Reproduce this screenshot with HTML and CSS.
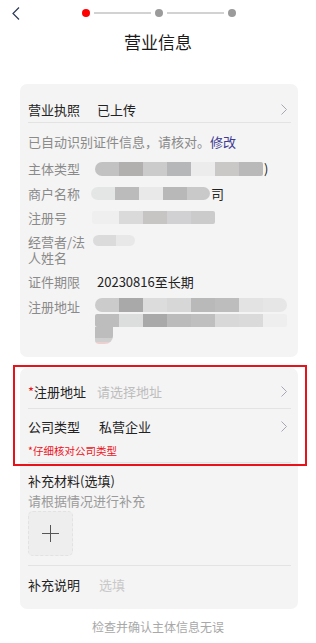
FILE: index.html
```html
<!DOCTYPE html>
<html lang="zh-CN">
<head>
    <meta charset="UTF-8">
    <meta name="viewport" content="width=device-width, initial-scale=1.0">
    <title>营业信息</title>
    <link rel="stylesheet" href="styles.css">
</head>
<body>
    <div class="topbar">
        <div class="back">
            <svg width="8" height="13" viewBox="0 0 8 13"><polyline points="7,0.5 1,6.5 7,12.5" fill="none" stroke="#2c3a55" stroke-width="1.2"/></svg>
        </div>
        <div class="steps">
            <span class="dot active"></span>
            <span class="line"></span>
            <span class="dot"></span>
            <span class="line"></span>
            <span class="dot"></span>
        </div>
        <div></div>
    </div>
    <h1 class="title">营业信息</h1>

    <div class="card card-info">
        <div class="row row-link">
            <span class="label dark">营业执照</span>
            <span class="value">已上传</span>
            <svg class="chev" width="6" height="11" viewBox="0 0 6 11"><polyline points="0.5,0.5 5.5,5.5 0.5,10.5" fill="none" stroke="#a7a7b3" stroke-width="1"/></svg>
        </div>
        <div class="hint">已自动识别证件信息，请核对。<a class="edit">修改</a></div>
        <div class="info-list">
            <div class="info">
                <span class="label">主体类型</span>
                <span class="value"><span class="mosaic m1"></span><span class="tail">)</span></span>
            </div>
            <div class="info">
                <span class="label">商户名称</span>
                <span class="value"><span class="mosaic m2"></span><span class="tail">司</span></span>
            </div>
            <div class="info">
                <span class="label">注册号</span>
                <span class="value"><span class="mosaic m3"></span></span>
            </div>
            <div class="info info-tall">
                <span class="label">经营者/法人姓名</span>
                <span class="value top"><span class="mosaic m4"></span></span>
            </div>
            <div class="info">
                <span class="label">证件期限</span>
                <span class="value dark">20230816至长期</span>
            </div>
            <div class="info">
                <span class="label">注册地址</span>
                <span class="value address">
                    <span class="mosaic m5"></span>
                    <span class="mosaic m6"></span>
                    <span class="mosaic m7"></span>
                </span>
            </div>
        </div>
    </div>

    <div class="card-wrap">
        <div class="card card-form">
            <div class="form-row first">
                <span class="label dark"><span class="req">*</span>注册地址</span>
                <span class="value placeholder">请选择地址</span>
                <svg class="chev" width="6" height="11" viewBox="0 0 6 11"><polyline points="0.5,0.5 5.5,5.5 0.5,10.5" fill="none" stroke="#a7a7b3" stroke-width="1"/></svg>
            </div>
            <div class="form-row second">
                <span class="label dark">公司类型</span>
                <span class="value dark shift">私营企业</span>
                <svg class="chev" width="6" height="11" viewBox="0 0 6 11"><polyline points="0.5,0.5 5.5,5.5 0.5,10.5" fill="none" stroke="#a7a7b3" stroke-width="1"/></svg>
            </div>
            <div class="warn">*仔细核对公司类型</div>

            <div class="extra">
                <div class="extra-title">补充材料(选填)</div>
                <div class="extra-hint">请根据情况进行补充</div>
                <div class="upload">
                    <svg width="17" height="17" viewBox="0 0 17 17"><path d="M8.5 0V17M0 8.5H17" stroke="#555" stroke-width="1"/></svg>
                </div>
            </div>
            <div class="form-row last">
                <span class="label dark">补充说明</span>
                <span class="value placeholder light shift">选填</span>
            </div>
        </div>
        <div class="highlight"></div>
    </div>

    <div class="footer">检查并确认主体信息无误</div>
</body>
</html>
```

FILE: styles.css
```css
body {
    margin: 0;
    font-family: "Noto Sans CJK SC", "Liberation Sans", sans-serif;
    background-color: #fff;
    color: #222;
    font-size: 13px;
}
.topbar {
    height: 26px;
    display: grid;
    grid-template-columns: 1fr auto 1fr;
    align-items: center;
}
.back {
    padding-left: 12px;
    display: flex;
    align-items: center;
}
.steps {
    display: flex;
    align-items: center;
    gap: 4px;
    margin-left: 1px;
}
.dot {
    width: 8px;
    height: 8px;
    border-radius: 50%;
    background-color: #9b9b9b;
}
.dot.active {
    background-color: #ff0000;
}
.line {
    width: 57px;
    height: 2px;
    background-color: #d2d2d2;
}
.title {
    margin: 4px 0 0 0;
    font-size: 17px;
    font-weight: normal;
    line-height: 24px;
    text-align: center;
    color: #1a1a1a;
}
.card {
    background-color: #f4f4f4;
    border-radius: 7px;
    width: 278px;
    box-sizing: border-box;
    padding: 0 7px 0 8px;
}
.card-info {
    margin: 30px 0 0 20px;
    padding-top: 12px;
    padding-bottom: 13px;
}
.label {
    color: #8a8a8a;
    width: 60px;
    flex-shrink: 0;
}
.dark {
    color: #222;
}
.value {
    margin-left: 9px;
    flex: 1;
    display: flex;
    align-items: center;
}
.row-link {
    display: flex;
    align-items: center;
    height: 26px;
    border-bottom: 1px solid #e3e3e3;
}
.chev {
    margin-right: 4px;
}
.hint {
    margin-top: 10px;
    line-height: 18px;
    color: #8a8a8a;
}
.edit {
    color: #3d3b92;
}
.info-list {
    margin-top: 9px;
    display: flex;
    flex-direction: column;
    gap: 7.5px;
}
.info {
    display: flex;
    line-height: 17px;
}
.info-tall {
    line-height: 16px;
}
.value.top {
    align-items: flex-start;
}
.tail {
    margin-left: 1px;
    color: #222;
}
.mosaic {
    display: block;
    height: 14px;
    border-radius: 7px;
    filter: blur(0.4px);
}
.m1 {
    width: 168px;
    margin-left: -2px;
    border-radius: 7px 2px 2px 7px;
    background: linear-gradient(90deg, #c2c2c2 0 24px, #b1b0ae 24px 48px, #cbcbcb 48px 72px, #b5b7b9 72px 96px, #ececec 96px 120px, #c9c8c6 120px 144px, #b9b9b9 144px);
}
.m2 {
    width: 119px;
    margin-left: -6px;
    height: 13px;
    background: linear-gradient(90deg, #e4e5e5 0 24px, #bbbbbb 24px 48px, #e9e9e9 48px 72px, #b8b8b8 72px 96px, #c9c9c9 96px);
}
.m3 {
    width: 123px;
    margin-left: -5px;
    height: 13px;
    border-radius: 2px;
    background: linear-gradient(90deg, #efefef 0 27px, #dadada 27px 51px, #c7c5c3 51px 75px, #d1d1d3 75px 99px, #cbcbcb 99px);
}
.m4 {
    width: 42px;
    margin-left: -4px;
    height: 11px;
    margin-top: 1px;
    border-radius: 6px;
    background: linear-gradient(90deg, #dbdbdb 0 23px, #e8e8e8 23px);
}
.value.address {
    flex-direction: column;
    align-items: flex-start;
}
.m5 {
    width: 192px;
    margin-left: -2px;
    background: linear-gradient(90deg, #cbcbcb 0 24px, #a9a9a9 24px 48px, #dcdcdc 48px 72px, #d7d7d7 72px 96px, #b9b9b9 96px 120px, #bdbdbd 120px 144px, #e3e3e3 144px 168px, #e6e6e6 168px);
}
.m6 {
    width: 192px;
    margin-left: -2px;
    margin-top: 2px;
    height: 13px;
    border-radius: 2px;
    background: linear-gradient(90deg, #bdbdbd 0 24px, #dcdddd 24px 48px, #a9a9a9 48px 72px, #bbbbbb 72px 96px, #bfbfbf 96px 120px, #d8d8d8 120px 144px, #dadada 144px 168px, #eeeeee 168px);
}
.m7 {
    width: 18px;
    height: 17px;
    margin-left: -2px;
    border-radius: 0 0 8px 4px;
    background: linear-gradient(180deg, #bdbdbd 0 11px, #cfcfcf 11px 15px, #ecd0d0 15px);
}
.card-wrap {
    position: relative;
    margin: 11px 0 0 20px;
    width: 278px;
}
.highlight {
    position: absolute;
    top: -3px;
    left: -7px;
    width: 294px;
    height: 101px;
    box-sizing: border-box;
    border: 2px solid #e8121b;
    pointer-events: none;
}
.card-form {
    padding-top: 15px;
    padding-bottom: 15px;
}
.form-row {
    display: flex;
    align-items: center;
    line-height: 18px;
}
.form-row.first {
    padding-bottom: 7px;
    border-bottom: 1px solid #e3e3e3;
}
.form-row.second {
    padding-top: 9px;
}
.req {
    color: #e8121b;
}
.placeholder {
    color: #bdbdbd;
}
.placeholder.light {
    color: #c8c8c8;
}
.shift {
    margin-left: 11px;
}
.warn {
    margin-top: 8px;
    padding-bottom: 4px;
    font-size: 10.5px;
    line-height: 14px;
    color: #ee1122;
    border-bottom: 1px solid #e3e3e3;
}
.extra {
    padding-top: 9px;
    padding-bottom: 9px;
    border-bottom: 1px solid #e3e3e3;
}
.extra-title {
    line-height: 18px;
    color: #1e1e1e;
}
.extra-hint {
    margin-top: 2px;
    line-height: 18px;
    color: #9a9a9a;
}
.upload {
    margin-top: 1px;
    width: 45px;
    height: 45px;
    box-sizing: border-box;
    border: 1px dashed #e2e2e2;
    border-radius: 5px;
    background-color: #eeeeee;
    display: flex;
    align-items: center;
    justify-content: center;
}
.form-row.last {
    padding-top: 10px;
}
.footer {
    margin-top: 9px;
    line-height: 18px;
    text-align: center;
    color: #a8a8a8;
    font-size: 12px;
}
```
